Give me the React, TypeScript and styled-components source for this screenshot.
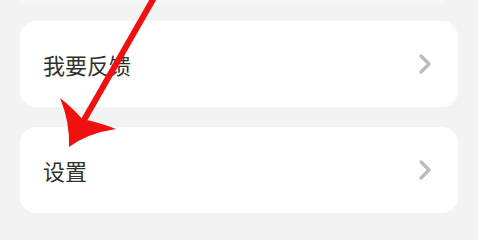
import styled, { createGlobalStyle } from 'styled-components';

const GlobalStyle = createGlobalStyle`
  html, body {
    margin: 0;
    padding: 0;
    background-color: #f3f3f3;
    font-family: 'Noto Sans CJK SC', 'Noto Sans', sans-serif;
  }
`;

const Page = styled.div`
  position: relative;
  width: 478px;
  height: 227px;
  overflow: hidden;
  background-color: #f3f3f3;
`;

const TopEdge = styled.div`
  height: 5px;
  margin: 0 35px 16px 20px;
  background-color: #f6f6f6;
`;

const List = styled.div`
  display: flex;
  flex-direction: column;
  gap: 20px;
  padding: 0 20px;
`;

const Card = styled.div`
  height: 86px;
  display: flex;
  align-items: center;
  justify-content: space-between;
  padding: 0 26px 0 23px;
  background-color: #ffffff;
  border-radius: 16px;
`;

const Label = styled.span`
  font-size: 22px;
  line-height: 24px;
  color: #303030;
`;

const Chevron = () => (
  <svg width="14" height="22" viewBox="0 0 14 22">
    <path d="M3 3 L11 11 L3 19" fill="none" stroke="#bababa" strokeWidth="3.2" strokeLinecap="round" strokeLinejoin="round" />
  </svg>
);

const ArrowLayer = styled.svg`
  position: absolute;
  top: 0;
  left: 0;
  pointer-events: none;
`;

const items = ['我要反馈', '设置'];

const App = () => {
  return (
    <Page>
      <GlobalStyle />
      <TopEdge />
      <List>
        {items.map((item) => (
          <Card key={item}>
            <Label>{item}</Label>
            <Chevron />
          </Card>
        ))}
      </List>
      <ArrowLayer width="478" height="227" viewBox="0 0 478 227">
        <line x1="155" y1="-4" x2="84" y2="120" stroke="#f20f0f" strokeWidth="6" />
        <path d="M60 98 Q75 110 82 119 Q98 122 116 129 Q88 133 69 147 Q70 122 60 98 Z" fill="#f20f0f" />
      </ArrowLayer>
    </Page>
  );
};

export default App;
